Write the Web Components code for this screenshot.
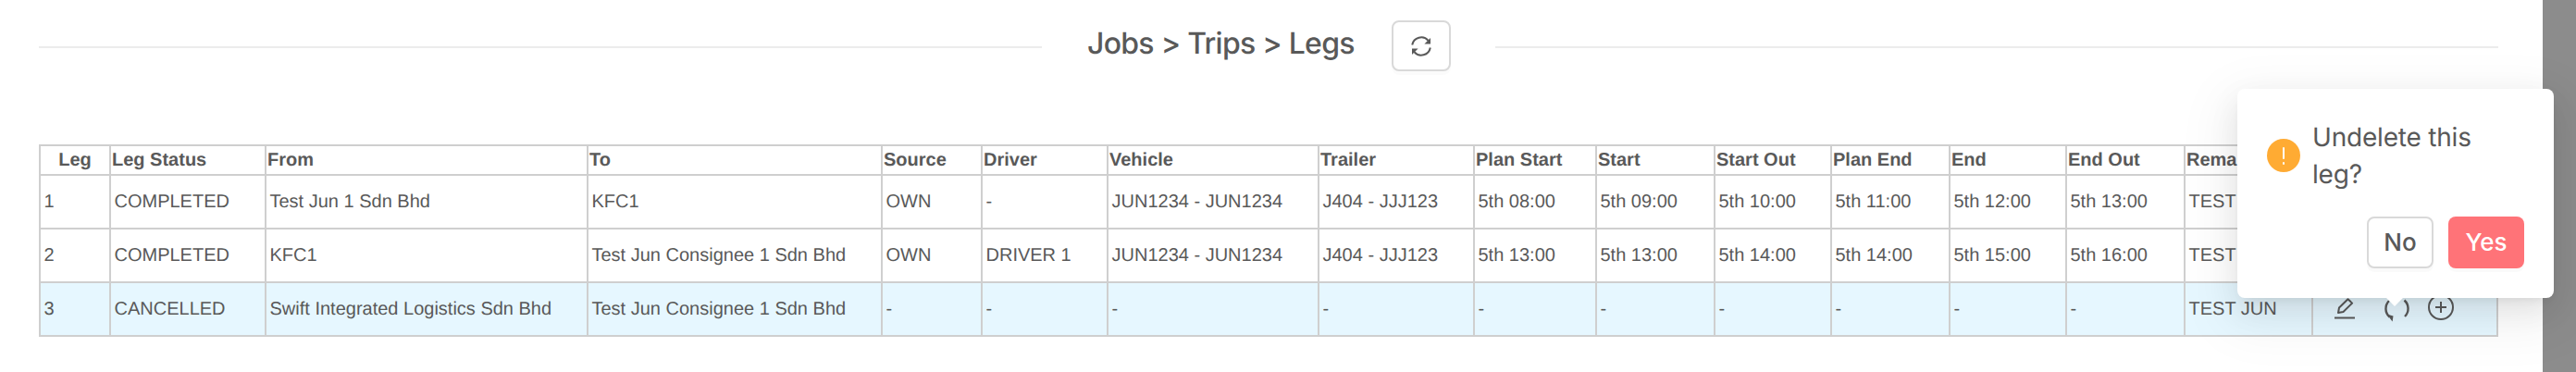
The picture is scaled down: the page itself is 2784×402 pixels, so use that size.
<!DOCTYPE html>
<html lang="en">
<head>
<meta charset="utf-8">
<title>Legs</title>
<style>
html,body{margin:0;padding:0;background:#fff;}
body{font-family:Inter,"Liberation Sans",sans-serif;color:#595959;text-rendering:geometricPrecision;}
</style>
</head>
<body>
<legs-page>
  <title-bar>Jobs &gt; Trips &gt; Legs</title-bar>
  <legs-table></legs-table>
  <confirm-popover slot="overlay">Undelete this leg?</confirm-popover>
</legs-page>
<script>
const ICONS={
 sync:`<svg viewBox="0 0 24 24" width="24" height="24" fill="none" stroke="#595959" stroke-width="2"><path d="M2.2 10.5A10 10 0 0 1 19.6 5.8"/><path d="M21.8 13.5A10 10 0 0 1 4.4 18.2"/><path d="M22 3v6.6h-6.6z" fill="#595959" stroke="none"/><path d="M2 21v-6.6h6.6z" fill="#595959" stroke="none"/></svg>`,
 edit:`<svg viewBox="0 0 28 28" width="28" height="28" fill="none" stroke="#595959" stroke-width="2" style="overflow:visible"><path d="M6 18l1-5.5L16.5 3.2l4.6 4.4-9.6 9.4z" stroke-linejoin="round"/><path d="M2 23.5h22"/></svg>`,
 undo:`<svg viewBox="0 0 28 28" width="28" height="28" fill="none" stroke="#595959" stroke-width="2.4"><path d="M6 5A12 12 0 0 0 6.5 22.5"/><path d="M22.5 4.5A12 12 0 0 1 23 22"/><path d="M3.5 19.5L10.5 21.5 9.6 27.4z" fill="#595959" stroke="none"/></svg>`,
 plus:`<svg viewBox="0 0 28 28" width="28" height="28" fill="none" stroke="#595959" stroke-width="2" style="overflow:visible"><circle cx="14" cy="12" r="13"/><path d="M8 12h12M14 6v12"/></svg>`
};
class UiIcon extends HTMLElement{
  constructor(){super();this.attachShadow({mode:'open'});}
  connectedCallback(){
    this.shadowRoot.innerHTML=`<style>:host{display:inline-flex;line-height:0;flex:none}</style>${ICONS[this.getAttribute('name')]||''}`;
  }
}
customElements.define('ui-icon',UiIcon);

class LegsPage extends HTMLElement{
  constructor(){super();this.attachShadow({mode:'open'}).innerHTML=`<style>
    :host{display:flex;height:402px;overflow:hidden;position:relative}
    main{flex:1;min-width:0;padding:22px 48px 0 42px}
    aside{flex:none;width:36px;background:#8c8c8c}
  </style><main><slot></slot></main><aside></aside><slot name="overlay"></slot>`;}
}
customElements.define('legs-page',LegsPage);

class TitleBar extends HTMLElement{
  constructor(){super();this.attachShadow({mode:'open'}).innerHTML=`<style>
    :host{display:flex;align-items:center;height:55px;margin-bottom:79px}
    i{flex:1;height:2px;background:#ececec;margin-top:3px}
    h1{flex:none;width:288px;margin:0 41px 0 49px;font:500 32px/55px Inter,"Liberation Sans",sans-serif;letter-spacing:-.72px;color:#595959;position:relative;top:-3px;white-space:nowrap}
    button{flex:none;width:64px;height:55px;margin-right:48px;background:#fff;border:2px solid #d9d9d9;border-radius:8px;display:flex;align-items:center;justify-content:center;padding:0;box-shadow:0 4px 0 rgba(0,0,0,.015)}
  </style><i></i><h1><slot></slot></h1><button aria-label="Refresh"><ui-icon name="sync"></ui-icon></button><i></i>`;}
}
customElements.define('title-bar',TitleBar);

const COLS=[76,168,348,318,108,136,228,168,132,128,126,128,126,128,138,200];
const HEAD=['Leg','Leg Status','From','To','Source','Driver','Vehicle','Trailer','Plan Start','Start','Start Out','Plan End','End','End Out','Remarks',''];
const ROWS=[
 ['1','COMPLETED','Test Jun 1 Sdn Bhd','KFC1','OWN','-','JUN1234 - JUN1234','J404 - JJJ123','5th 08:00','5th 09:00','5th 10:00','5th 11:00','5th 12:00','5th 13:00','TEST JUN'],
 ['2','COMPLETED','KFC1','Test Jun Consignee 1 Sdn Bhd','OWN','DRIVER 1','JUN1234 - JUN1234','J404 - JJJ123','5th 13:00','5th 13:00','5th 14:00','5th 14:00','5th 15:00','5th 16:00','TEST JUN'],
 ['3','CANCELLED','Swift Integrated Logistics Sdn Bhd','Test Jun Consignee 1 Sdn Bhd','-','-','-','-','-','-','-','-','-','-','TEST JUN']
];
class LegsTable extends HTMLElement{
  constructor(){super();
    const actions=`<td class="act"><div><ui-icon name="edit"></ui-icon><ui-icon name="undo"></ui-icon><ui-icon name="plus"></ui-icon></div></td>`;
    this.attachShadow({mode:'open'}).innerHTML=`<style>
    :host{display:block}
    table{border-collapse:collapse;table-layout:fixed;width:2658px;font:20px "Liberation Sans",Arial,sans-serif;color:#595959}
    th,td{border:2px solid #cfcfcf;padding:0 3.5px;text-align:left;white-space:nowrap;overflow:hidden}
    th{font-weight:700;height:30px;padding:0 1px}
    th:first-child{text-align:center}
    td{height:56px}
    tr.off td{background:#e6f7ff}
    .act{padding:0}
    .act div{display:flex;align-items:center;padding-left:21px}
    .act ui-icon:nth-child(2){margin-left:27px}
    .act ui-icon:nth-child(3){margin-left:20px}
  </style><table><colgroup>${COLS.map(w=>`<col style="width:${w}px">`).join('')}</colgroup>
  <thead><tr>${HEAD.map(h=>`<th>${h}</th>`).join('')}</tr></thead>
  <tbody>${ROWS.map((r,i)=>`<tr class="${i==2?'off':''}">${r.map(c=>`<td>${c}</td>`).join('')}${actions}</tr>`).join('')}</tbody></table>`;}
}
customElements.define('legs-table',LegsTable);

class ConfirmPopover extends HTMLElement{
  constructor(){super();this.attachShadow({mode:'open'}).innerHTML=`<style>
    :host{display:block;position:absolute;left:2418px;top:96px;width:342px;height:226px;box-sizing:border-box;padding:32px;background:#fff;border-radius:8px;
      box-shadow:0 6px 12px -8px rgba(0,0,0,.12),0 12px 32px 0 rgba(0,0,0,.08),0 18px 56px 16px rgba(0,0,0,.05);
      font:400 28px/40px Inter,"Liberation Sans",sans-serif;letter-spacing:-.2px;color:#595959}
    .msg{display:flex;align-items:center;gap:13px}
    .dot{flex:none;width:36px;height:36px;border-radius:50%;background:#ffab33;display:flex;flex-direction:column;align-items:center;justify-content:center;gap:3px}
    .dot b{display:block;width:2.5px;background:#fff;border-radius:1px}
    .dot b:first-child{height:13px}.dot b:last-child{height:3px}
    .txt{max-width:200px}
    .btns{display:flex;justify-content:flex-end;gap:16px;margin-top:26px}
    button{height:56px;box-sizing:border-box;border-radius:8px;font:500 26px/1 Inter,"Liberation Sans",sans-serif;padding:0;box-shadow:0 4px 0 rgba(0,0,0,.02)}
    .no{width:72px;background:#fff;border:2px solid #d9d9d9;color:#595959}
    .yes{width:82px;background:#ff7378;border:0;color:#fff}
    .arrow{position:absolute;left:163px;top:218px;width:14px;height:14px;background:#fff;transform:rotate(45deg)}
  </style><div class="msg"><div class="dot"><b></b><b></b></div><div class="txt"><slot></slot></div></div>
  <div class="btns"><button class="no">No</button><button class="yes">Yes</button></div><div class="arrow"></div>`;}
}
customElements.define('confirm-popover',ConfirmPopover);
</script>
</body>
</html>
